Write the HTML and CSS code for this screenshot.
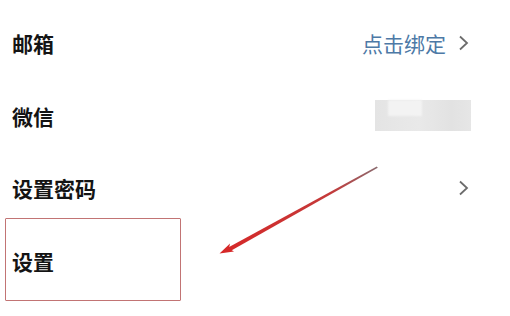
FILE: index.html
```html
<!DOCTYPE html>
<html lang="zh-CN">
	<head>
		<meta charset="UTF-8" />
		<meta name="viewport" content="width=device-width, initial-scale=1.0" />
		<title>账号设置</title>
		<link rel="stylesheet" href="styles.css">
	</head>
	<body>
		<div class="list">
			<div class="row">
				<span class="label">邮箱</span>
				<span class="value">
					<span class="link">点击绑定</span>
					<svg class="chevron" width="12" height="16" viewBox="0 0 12 16"><path d="M2 1.5 L9 8 L2 14.5" /></svg>
				</span>
			</div>
			<div class="row">
				<span class="label">微信</span>
				<span class="value">
					<span class="blur"><span class="blur-hi"></span></span>
				</span>
			</div>
			<div class="row">
				<span class="label">设置密码</span>
				<span class="value">
					<svg class="chevron" width="12" height="16" viewBox="0 0 12 16"><path d="M2 1.5 L9 8 L2 14.5" /></svg>
				</span>
			</div>
			<div class="row">
				<span class="label">设置</span>
			</div>
		</div>

		<div class="mark"></div>
		<svg class="arrow" width="510" height="316" viewBox="0 0 510 316">
			<defs>
				<linearGradient id="fade" x1="377" y1="167" x2="222" y2="252" gradientUnits="userSpaceOnUse">
					<stop offset="0" stop-color="#8a6a6e" />
					<stop offset="0.3" stop-color="#c43a3a" />
					<stop offset="1" stop-color="#d62828" />
				</linearGradient>
			</defs>
			<polygon points="376.8,166.4 377.8,167.8 230,251.2 228.2,247.6" fill="url(#fade)" />
			<polygon points="219.5,253.5 230,243.5 229,248.6 234,251.5" fill="#d62828" />
		</svg>
	</body>
</html>
```

FILE: styles.css
```css
body {
	margin: 0;
	background-color: #ffffff;
	font-family: "Noto Sans CJK SC", "Noto Sans", sans-serif;
}
.list {
	padding-top: 7px;
}
.row {
	display: flex;
	align-items: center;
	justify-content: space-between;
	height: 72.5px;
	padding: 0 39px 0 12px;
}
.label {
	font-size: 21px;
	font-weight: bold;
	color: #141414;
}
.value {
	display: flex;
	align-items: center;
	gap: 12px;
}
.link {
	font-size: 21px;
	color: #4d79a6;
}
.chevron {
	fill: none;
	stroke: #6c6c6c;
	stroke-width: 1.8;
	margin-right: 1px;
}
.blur {
	display: block;
	width: 96px;
	height: 31px;
	background: linear-gradient(90deg, #e4e4e4, #e9e9e9 45%, #e2e2e2 80%, #e6e6e6);
	filter: blur(0.6px);
	position: relative;
}
.blur-hi {
	position: absolute;
	left: 13px;
	top: 0;
	width: 34px;
	height: 16px;
	background-color: #f3f3f3;
	filter: blur(1px);
}
.mark {
	position: absolute;
	left: 5px;
	top: 218px;
	width: 174px;
	height: 81px;
	border: 1.5px solid #c27474;
	border-radius: 1px;
}
.arrow {
	position: absolute;
	left: 0;
	top: 0;
}
```
